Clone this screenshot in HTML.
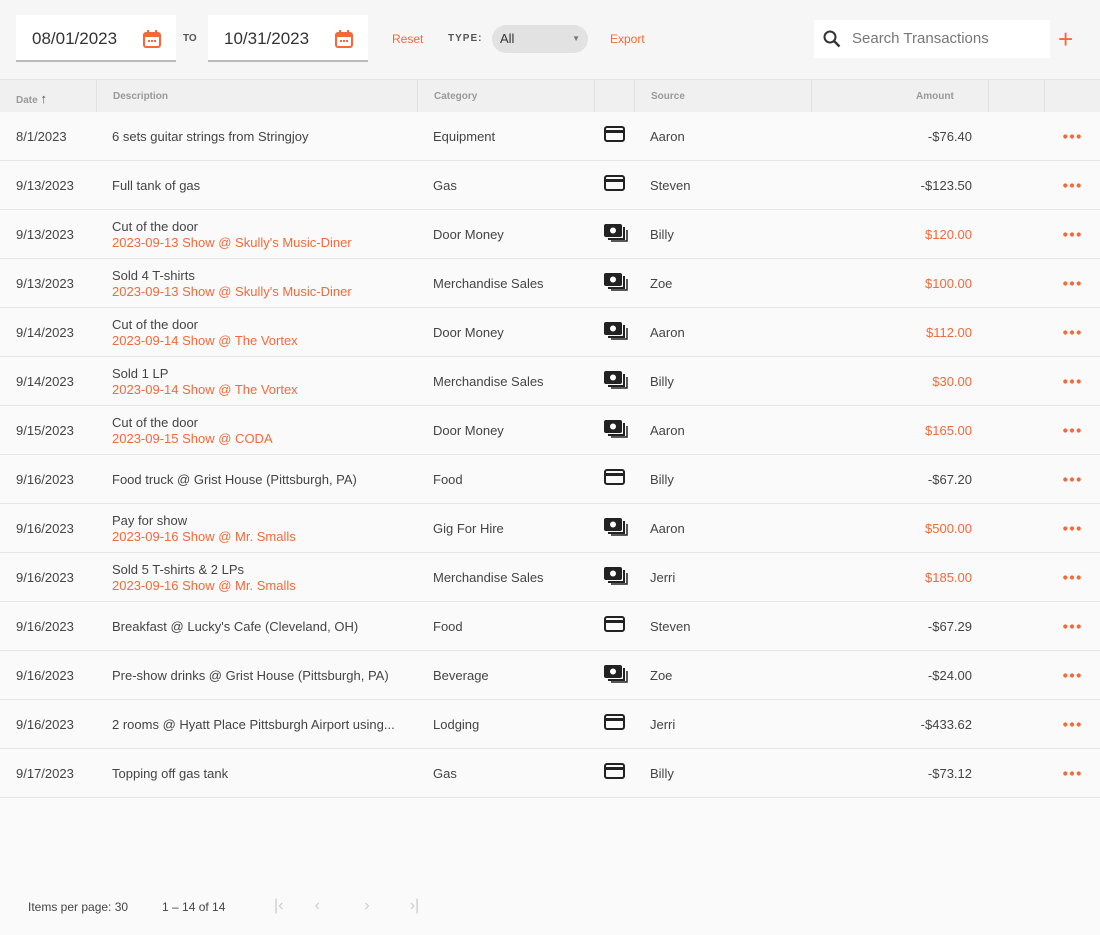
<!DOCTYPE html><html><head><style>
body{margin:0;width:1100px;height:935px;background:#fafafa;font-family:"Liberation Sans",sans-serif;color:#333;position:relative;overflow:hidden}
.top{position:absolute;left:0;top:0;width:1100px;height:79px;background:#f6f6f6;border-bottom:1px solid #e4e4e4}
.df{position:absolute;top:15px;width:160px;height:47px;background:#fff;border-bottom:2px solid #bbb;font-size:17px;line-height:48px;box-sizing:border-box;padding-left:16px;color:#333}
.cal{position:absolute;right:14px;top:14px}
.or{color:#f4693a}
.th{position:absolute;top:80px;height:32px;width:1100px;background:#f0f0f0;font-size:10px;color:#999;font-weight:bold}
.th span{position:absolute;top:11px}
.th i{position:absolute;top:0;width:1px;height:32px;background:#e2e2e2}
.row{position:absolute;left:0;width:1100px;height:48px;border-bottom:1px solid #e6e6e6;font-size:13px;color:#444}
.row div{position:absolute}
.s{top:17px}
.d2{top:9px;line-height:16px}
.amt{right:128px;top:17px;text-align:right}
.dots{left:1063px;top:22px;line-height:0}
.dots svg{display:block}
.ic{left:604px;top:14px}
.ft{position:absolute;top:900px;font-size:12px;color:#444}
</style></head><body>
<div class="top">
<div class="df" style="left:16px">08/01/2023<svg class="cal" width="20" height="20" viewBox="0 0 20 20"><rect x="2" y="4" width="16" height="14" rx="2" fill="none" stroke="#f4693a" stroke-width="2"/><rect x="2" y="4" width="16" height="4" fill="#f4693a"/><rect x="5" y="1" width="2" height="4" fill="#f4693a"/><rect x="13" y="1" width="2" height="4" fill="#f4693a"/><rect x="6" y="11" width="2" height="2" fill="#f4693a"/><rect x="9" y="11" width="2" height="2" fill="#f4693a"/><rect x="12" y="11" width="2" height="2" fill="#f4693a"/></svg></div>
<div style="position:absolute;left:183px;top:33px;font-size:10px;font-weight:bold;color:#555">TO</div>
<div class="df" style="left:208px">10/31/2023<svg class="cal" width="20" height="20" viewBox="0 0 20 20"><rect x="2" y="4" width="16" height="14" rx="2" fill="none" stroke="#f4693a" stroke-width="2"/><rect x="2" y="4" width="16" height="4" fill="#f4693a"/><rect x="5" y="1" width="2" height="4" fill="#f4693a"/><rect x="13" y="1" width="2" height="4" fill="#f4693a"/><rect x="6" y="11" width="2" height="2" fill="#f4693a"/><rect x="9" y="11" width="2" height="2" fill="#f4693a"/><rect x="12" y="11" width="2" height="2" fill="#f4693a"/></svg></div>
<div class="or" style="position:absolute;left:392px;top:32px;font-size:12px">Reset</div>
<div style="position:absolute;left:448px;top:33px;font-size:10px;font-weight:bold;color:#555;letter-spacing:1px">TYPE:</div>
<div style="position:absolute;left:492px;top:25px;width:96px;height:28px;border-radius:14px;background:#e2e2e2;font-size:13px;line-height:28px;padding-left:8px;box-sizing:border-box">All<span style="position:absolute;right:8px;font-size:8px;color:#777">▼</span></div>
<div class="or" style="position:absolute;left:610px;top:32px;font-size:12px">Export</div>
<div style="position:absolute;left:814px;top:20px;width:236px;height:38px;background:#fff;font-size:15px;color:#777;line-height:38px;padding-left:38px;box-sizing:border-box">Search Transactions<svg style="position:absolute;left:9px;top:10px" width="18" height="18" viewBox="0 0 18 18"><circle cx="7" cy="7" r="5.5" fill="none" stroke="#333" stroke-width="2"/><path d="M11 11l5.5 5.5" stroke="#333" stroke-width="2.4"/></svg></div>
<div class="or" style="position:absolute;left:1058px;top:25px;font-size:26px;line-height:28px">+</div>
</div>
<div class="th"><span style="left:16px">Date <b style="font-size:13px;color:#555">↑</b></span><i style="left:96px"></i><span style="left:113px">Description</span><i style="left:417px"></i><span style="left:434px">Category</span><i style="left:594px"></i><i style="left:634px"></i><span style="left:651px">Source</span><i style="left:811px"></i><span style="left:916px">Amount</span><i style="left:988px"></i><i style="left:1044px"></i></div>
<div id="rows"></div>
<script>
const card='<svg width="21" height="16" viewBox="0 0 21 16"><rect x="1" y="1" width="19" height="14" rx="2" fill="none" stroke="#222" stroke-width="2"/><rect x="1" y="4" width="19" height="3" fill="#222"/></svg>';
const cash='<svg width="24" height="18" viewBox="0 0 24 18"><rect x="0" y="0" width="18" height="13" rx="2" fill="#222"/><circle cx="9" cy="6.5" r="3" fill="#fff"/><path d="M20 3v12H4" fill="none" stroke="#222" stroke-width="2"/><path d="M23 6v11H7" fill="none" stroke="#222" stroke-width="1.5"/></svg>';
const dots='<svg width="18" height="5" viewBox="0 0 18 5"><circle cx="2.3" cy="2.5" r="2.1" fill="#f4693a"/><circle cx="9" cy="2.5" r="2.1" fill="#f4693a"/><circle cx="15.7" cy="2.5" r="2.1" fill="#f4693a"/></svg>';
const R=[["8/1/2023","6 sets guitar strings from Stringjoy","","Equipment",0,"Aaron","-$76.40"],
["9/13/2023","Full tank of gas","","Gas",0,"Steven","-$123.50"],
["9/13/2023","Cut of the door","2023-09-13 Show @ Skully's Music-Diner","Door Money",1,"Billy","$120.00"],
["9/13/2023","Sold 4 T-shirts","2023-09-13 Show @ Skully's Music-Diner","Merchandise Sales",1,"Zoe","$100.00"],
["9/14/2023","Cut of the door","2023-09-14 Show @ The Vortex","Door Money",1,"Aaron","$112.00"],
["9/14/2023","Sold 1 LP","2023-09-14 Show @ The Vortex","Merchandise Sales",1,"Billy","$30.00"],
["9/15/2023","Cut of the door","2023-09-15 Show @ CODA","Door Money",1,"Aaron","$165.00"],
["9/16/2023","Food truck @ Grist House (Pittsburgh, PA)","","Food",0,"Billy","-$67.20"],
["9/16/2023","Pay for show","2023-09-16 Show @ Mr. Smalls","Gig For Hire",1,"Aaron","$500.00"],
["9/16/2023","Sold 5 T-shirts & 2 LPs","2023-09-16 Show @ Mr. Smalls","Merchandise Sales",1,"Jerri","$185.00"],
["9/16/2023","Breakfast @ Lucky's Cafe (Cleveland, OH)","","Food",0,"Steven","-$67.29"],
["9/16/2023","Pre-show drinks @ Grist House (Pittsburgh, PA)","","Beverage",1,"Zoe","-$24.00"],
["9/16/2023","2 rooms @ Hyatt Place Pittsburgh Airport using...","","Lodging",0,"Jerri","-$433.62"],
["9/17/2023","Topping off gas tank","","Gas",0,"Billy","-$73.12"]];
let h='';R.forEach((r,i)=>{const y=112+i*49;const pos=r[6][0]!='-';
h+=`<div class="row" style="top:${y}px"><div class="s" style="left:16px">${r[0]}</div>`+
(r[2]?`<div class="d2" style="left:112px">${r[1]}<br><span class="or">${r[2]}</span></div>`:`<div class="s" style="left:112px">${r[1]}</div>`)+
`<div class="s" style="left:433px">${r[3]}</div><div class="ic">${r[4]?cash:card}</div><div class="s" style="left:650px">${r[5]}</div><div class="amt${pos?' or':''}">${r[6]}</div><div class="dots">${dots}</div></div>`;});
document.getElementById('rows').innerHTML=h;
</script>
<div class="ft" style="left:28px">Items per page: 30</div>
<div class="ft" style="left:162px">1 – 14 of 14</div>
<div class="ft" style="left:274px;color:#ccc;font-size:16px;top:897px;letter-spacing:0">|‹&nbsp;&nbsp;&nbsp;&nbsp;&nbsp;&nbsp;&nbsp;‹&nbsp;&nbsp;&nbsp;&nbsp;&nbsp;&nbsp;&nbsp;&nbsp;&nbsp;&nbsp;›&nbsp;&nbsp;&nbsp;&nbsp;&nbsp;&nbsp;&nbsp;&nbsp;&nbsp;›|</div>
</body></html>
